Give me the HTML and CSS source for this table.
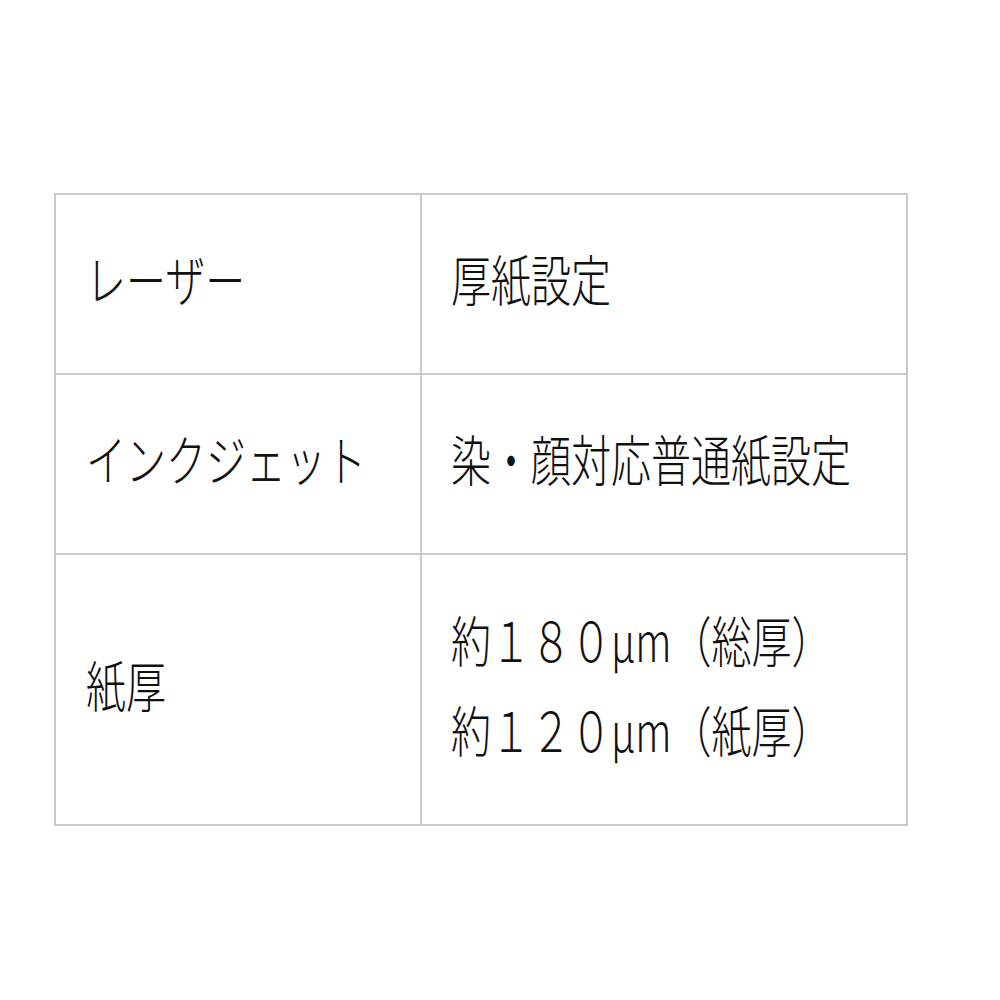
FILE: index.html
```html
<!DOCTYPE html>
<html lang="ja">
<head>
<meta charset="utf-8">
<link rel="stylesheet" href="styles.css">
</head>
<body>
<div class="spec">
  <div class="cell k r1"><span class="t">レーザー</span></div>
  <div class="cell v r1"><span class="t">厚紙設定</span></div>
  <div class="cell k r2"><span class="t">インクジェット</span></div>
  <div class="cell v r2"><span class="t">染・顔対応普通紙設定</span></div>
  <div class="cell k r3"><span class="t">紙厚</span></div>
  <div class="cell v r3"><span class="t">約１８０μm（総厚）<br>約１２０μm（紙厚）</span></div>
</div>
</body>
</html>
```
FILE: styles.css
```css
html, body {
  margin: 0;
  padding: 0;
  background: #fff;
}
body {
  font-family: "Noto Sans CJK JP", "Noto Sans", sans-serif;
  color: #111;
}
.spec {
  margin: 193px 0 0 54px;
  width: max-content;
  display: grid;
  grid-template-columns: 366px 486px;
  grid-template-rows: 180px 180px 271px;
  border-top: 2px solid #c9c9c9;
  border-left: 2px solid #c9c9c9;
}
.cell {
  box-sizing: border-box;
  border-right: 2px solid #c9c9c9;
  border-bottom: 2px solid #c9c9c9;
  display: flex;
  align-items: center;
  padding-bottom: 12px;
  font-size: 40px;
  font-weight: 300;
  line-height: 66px;
  white-space: nowrap;
}
.k { padding-left: 30px; }
.v { padding-left: 29px; }
.t {
  display: inline-block;
  transform: scaleY(1.36);
  transform-origin: center center;
}
```
